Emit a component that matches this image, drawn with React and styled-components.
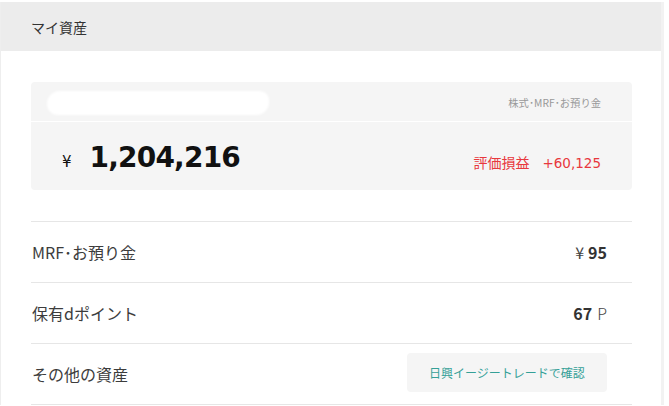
import styled, { createGlobalStyle } from 'styled-components'

const Global = createGlobalStyle`
  body {
    margin: 0;
    background: #fff;
    font-family: "Noto Sans CJK JP", "DejaVu Sans", sans-serif;
    color: #333;
  }
`

const Page = styled.div`
  padding-top: 2px;
  display: flex;
`

const Card = styled.div`
  width: 660px;
  border-left: 1px solid #eee;
  border-right: 3px solid #f2f2f2;
  background: #fff;
`

const Header = styled.div`
  height: 49px;
  background: #ececec;
  display: flex;
  align-items: center;
  padding-left: 30px;
  font-size: 14px;
  color: #333;
`

const Body = styled.div`
  padding: 31px 29px 0 30px;
`

const Summary = styled.div`
  background: #f5f5f5;
  border-radius: 4px;
  overflow: hidden;
`

const SummaryTop = styled.div`
  height: 39px;
  display: flex;
  align-items: center;
  justify-content: space-between;
  padding: 0 31px 0 16px;
  border-bottom: 1px solid #fff;
`

const Mask = styled.span`
  width: 222px;
  height: 24px;
  margin-top: 2px;
  background: #fff;
  border-radius: 14px 10px 14px 12px;
  filter: blur(1px);
`

const Caption = styled.span`
  font-size: 10.3px;
  color: #999;
  margin-top: 2px;
`

const SummaryMain = styled.div`
  height: 68px;
  display: flex;
  align-items: center;
  justify-content: space-between;
  padding: 0 31px 0 31px;
`

const Total = styled.div`
  display: flex;
  align-items: baseline;
  gap: 18px;
  margin-top: 2px;
  color: #111;
`

const Yen = styled.span`
  font-size: 15px;
  font-family: "DejaVu Sans", sans-serif;
`

const Big = styled.span`
  font-size: 28px;
  font-weight: bold;
  letter-spacing: -0.8px;
  font-family: "DejaVu Sans", sans-serif;
`

const Gain = styled.span`
  color: #e8383d;
  font-size: 14px;
  margin-top: 12px;
  display: flex;
  align-items: baseline;
  gap: 13px;
`

const GainNum = styled.span`
  font-family: "DejaVu Sans", sans-serif;
  font-size: 13.5px;
`

const List = styled.div`
  margin-top: 31px;
  border-bottom: 1px solid #e6e6e6;
`

const Row = styled.div`
  height: 60px;
  border-top: 1px solid #e6e6e6;
  display: flex;
  align-items: center;
  justify-content: space-between;
  padding-right: 25px;
`

const Label = styled.span`
  font-size: 16px;
  color: #3c3c3c;
  margin-left: 1px;
`

const Value = styled.span`
  font-size: 16px;
  color: #333;
  display: flex;
  align-items: baseline;
  gap: ${p => p.$gap || 0}px;
`

const Bold = styled.b`
  font-weight: bold;
  font-size: 16px;
`

const Unit = styled.span`
  font-weight: ${p => p.$light ? 300 : 400};
  color: #444;
`

const LinkButton = styled.a`
  width: 200px;
  height: 39px;
  border-radius: 4px;
  background: #f5f5f5;
  color: #34a097;
  font-size: 12px;
  display: flex;
  align-items: center;
  justify-content: center;
  text-decoration: none;
  margin-bottom: 3px;
`

export default function App() {
  return (
    <Page>
      <Global />
      <Card>
        <Header>マイ資産</Header>
        <Body>
          <Summary>
            <SummaryTop>
              <Mask />
              <Caption>株式･MRF･お預り金</Caption>
            </SummaryTop>
            <SummaryMain>
              <Total>
                <Yen>¥</Yen>
                <Big>1,204,216</Big>
              </Total>
              <Gain>
                <span>評価損益</span>
                <GainNum>+60,125</GainNum>
              </Gain>
            </SummaryMain>
          </Summary>
          <List>
            <Row>
              <Label>MRF･お預り金</Label>
              <Value $gap={4}>
                <Unit>¥</Unit>
                <Bold>95</Bold>
              </Value>
            </Row>
            <Row>
              <Label>保有dポイント</Label>
              <Value $gap={5}>
                <Bold>67</Bold>
                <Unit $light>P</Unit>
              </Value>
            </Row>
            <Row>
              <Label>その他の資産</Label>
              <LinkButton href="#">日興イージートレードで確認</LinkButton>
            </Row>
          </List>
        </Body>
      </Card>
    </Page>
  )
}
